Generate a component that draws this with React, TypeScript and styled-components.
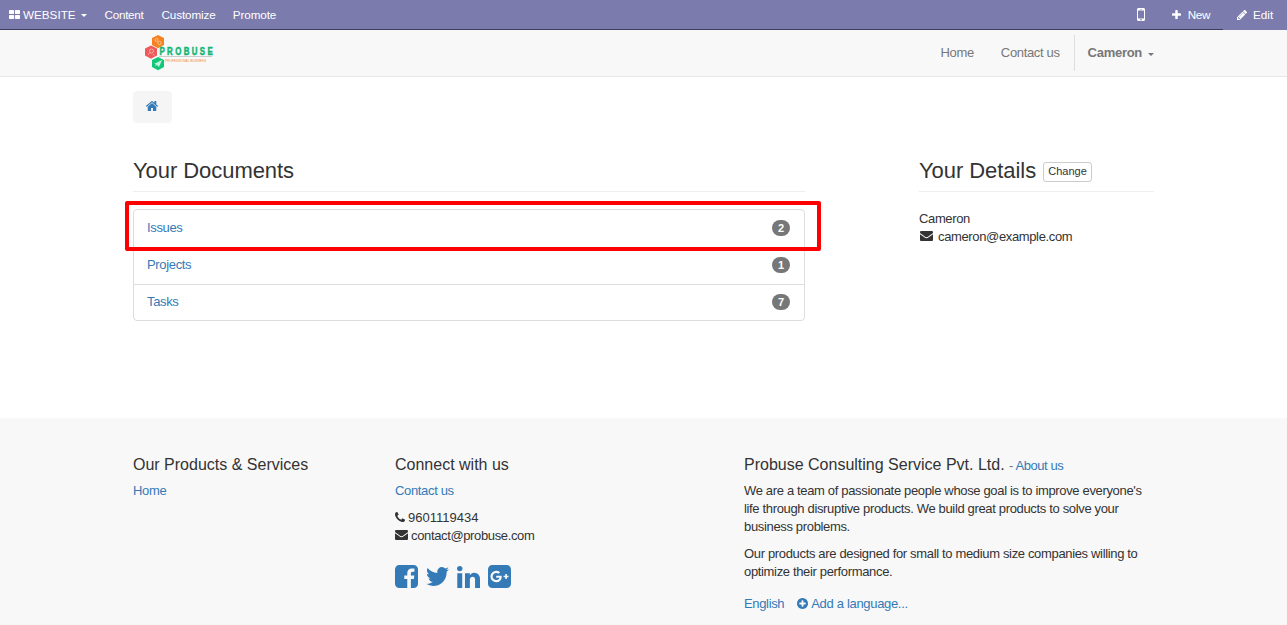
import React from 'react';
import styled, { createGlobalStyle } from 'styled-components';

const GlobalStyle = createGlobalStyle`
  *, *::before, *::after { box-sizing: border-box; }
  body {
    margin: 0;
    background: #fff;
    color: #333;
    font: 13px/18px "Liberation Sans", Arial, sans-serif;
    letter-spacing: -0.34px;
    overflow: hidden;
  }
  h3, h4, p, ul { margin: 0; padding: 0; font-weight: 400; }
  a { color: #337ab7; text-decoration: none; }
`;

/* Font Awesome 4 outlines: viewBox and path */
const glyphs = {
  thLarge: ['64 128 1664 1408', 'M832 1024v384q0 52-38 90t-90 38h-512q-52 0-90-38t-38-90v-384q0-52 38-90t90-38h512q52 0 90 38t38 90zm0-768v384q0 52-38 90t-90 38h-512q-52 0-90-38t-38-90v-384q0-52 38-90t90-38h512q52 0 90 38t38 90zm896 768v384q0 52-38 90t-90 38h-512q-52 0-90-38t-38-90v-384q0-52 38-90t90-38h512q52 0 90 38t38 90zm0-768v384q0 52-38 90t-90 38h-512q-52 0-90-38t-38-90v-384q0-52 38-90t90-38h512q52 0 90 38t38 90z'],
  home: ['89 250 1614 1290', 'M1472 992v480q0 26-19 45t-45 19h-384v-384h-256v384h-384q-26 0-45-19t-19-45v-480q0-1 .5-3t.5-3l575-474 575 474q1 2 1 6zm223-69l-62 74q-8 9-21 11h-3q-13 0-21-7l-692-577-692 577q-12 8-24 7-13-2-21-11l-62-74q-8-10-7-23.5t11-21.5l719-599q32-26 76-26t76 26l244 204v-195q0-14 9-23t23-9h192q14 0 23 9t9 23v408l219 182q10 8 11 21.5t-7 23.5z'],
  plus: ['192 128 1408 1408', 'M1600 736v192q0 40-28 68t-68 28h-416v416q0 40-28 68t-68 28h-192q-40 0-68-28t-28-68v-416h-416q-40 0-68-28t-28-68v-192q0-40 28-68t68-28h416v-416q0-40 28-68t68-28h192q40 0 68 28t28 68v416h416q40 0 68 28t28 68z'],
  pencil: ['128 149 1515 1515', 'M491 1536l91-91-235-235-91 91v107h128v128h107zm523-928q0-22-22-22-10 0-17 7l-542 542q-7 7-7 17 0 22 22 22 10 0 17-7l542-542q7-7 7-17zm-54-192l416 416-832 832h-416v-416zm683 96q0 53-37 90l-166 166-416-416 166-165q36-38 90-38 53 0 91 38l235 234q37 39 37 91z'],
  mobile: ['512 256 768 1280', 'M976 1408q0-33-23.5-56.5t-56.5-23.5-56.5 23.5-23.5 56.5 23.5 56.5 56.5 23.5 56.5-23.5 23.5-56.5zm208-160v-704q0-13-9.5-22.5t-22.5-9.5h-512q-13 0-22.5 9.5t-9.5 22.5v704q0 13 9.5 22.5t22.5 9.5h512q13 0 22.5-9.5t9.5-22.5zm-192-848q0-16-16-16h-160q-16 0-16 16t16 16h160q16 0 16-16zm288-16v1024q0 52-38 90t-90 38h-512q-52 0-90-38t-38-90v-1024q0-52 38-90t90-38h512q52 0 90 38t38 90z'],
  envelope: ['0 256 1792 1408', 'M1792 710v794q0 66-47 113t-113 47h-1472q-66 0-113-47t-47-113v-794q44 49 101 87 362 246 497 345 57 42 92.5 65.5t94.5 48 110 24.5h2q51 0 110-24.5t94.5-48 92.5-65.5q170-123 498-345 57-39 100-87zm0-294q0 79-49 151t-122 123q-376 261-468 325-10 7-42.5 31t-54 38.5-52 32.5-57.5 27-50 9h-2q-23 0-50-9t-57.5-27-52-32.5-54-38.5-42.5-31q-91-64-262-182.5t-205-142.5q-62-42-117-115.5t-55-136.5q0-78 41.5-130t118.5-52h1472q65 0 112.5 47t47.5 113z'],
  phone: ['192 128 1408 1408', 'M1600 1240q0 27-10 70.5t-21 68.5q-21 50-122 106-94 51-186 51-27 0-52.5-3.5t-57.5-12.5-47.5-14.5-55.5-20.5-49-18q-98-35-175-83-128-79-264.5-215.5t-215.5-264.5q-48-77-83-175-3-9-18-49t-20.5-55.5-14.5-47.5-12.5-57.5-3.5-52.5q0-92 51-186 56-101 106-122 25-11 68.5-21t70.5-10q14 0 21 3 18 6 53 76 11 19 30 54t35 63.5 31 53.5q3 4 17.5 25t21.5 35.5 7 28.5q0 20-28.5 50t-62 55-62 53-28.5 46q0 9 5 22.5t8.5 20.5 14 24 11.5 19q76 137 174 235t235 174q2 1 19 11.5t24 14 20.5 8.5 22.5 5q18 0 46-28.5t53-62 55-62 50-28.5q14 0 28.5 7t35.5 21.5 25 17.5q25 15 53.5 31t63.5 35 54 30q70 35 76 53 3 7 3 21z'],
  facebook: ['128 128 1536 1536', 'M1376 128q119 0 203.5 84.5t84.5 203.5v960q0 119-84.5 203.5t-203.5 84.5h-188v-595h199l30-232h-229v-148q0-56 23.5-84t91.5-28l122-1v-207q-63-9-178-9-136 0-217.5 80t-81.5 226v171h-200v232h200v595h-532q-119 0-203.5-84.5t-84.5-203.5v-960q0-119 84.5-203.5t203.5-84.5h960z'],
  twitter: ['108 256 1576 1280', 'M1684 408q-67 98-162 167 1 14 1 42 0 130-38 259.5t-115.5 248.5-184.5 210.5-258 146-323 54.5q-271 0-496-145 35 4 78 4 225 0 401-138-105-2-188-64.5t-114-159.5q33 5 61 5 43 0 85-11-112-23-185.5-111.5t-73.5-205.5v-4q68 38 146 41-66-44-105-115t-39-154q0-88 44-163 121 149 294.5 238.5t371.5 99.5q-8-38-8-74 0-134 94.5-228.5t228.5-94.5q140 0 236 102 109-21 205-78-37 115-142 178 93-10 186-50z'],
  linkedin: ['128 148 1536 1468', 'M477 625v991h-330v-991h330zm21-306q1 73-50.5 122t-135.5 49h-2q-82 0-132-49t-50-122q0-74 51.5-122.5t134.5-48.5 133 48.5 51 122.5zm1166 729v568h-329v-530q0-105-40.5-164.5t-126.5-59.5q-63 0-105.5 34.5t-63.5 85.5q-11 30-11 81v553h-329q2-399 2-647t-1-296l-1-48h329v144h-2q20-32 41-56t56.5-52 87-43.5 114.5-15.5q171 0 275 113.5t104 332.5z'],
  googlePlus: ['128 128 1536 1536', 'M1045 905q0-26-6-64h-362v132h217q-3 24-16.5 50t-37.5 53-66.5 44.5-96.5 17.5q-99 0-169-71t-70-171 70-171 169-71q92 0 153 59l104-101q-108-100-257-100-160 0-272 112.5t-112 271.5 112 271.5 272 112.5q165 0 266.5-105t101.5-270zm345 46h109v-110h-109v-110h-110v110h-110v110h110v110h110v-110zm274-535v960q0 119-84.5 203.5t-203.5 84.5h-960q-119 0-203.5-84.5t-84.5-203.5v-960q0-119 84.5-203.5t203.5-84.5h960q119 0 203.5 84.5t84.5 203.5z'],
  plusCircle: ['128 128 1536 1536', 'M1344 960v-128q0-26-19-45t-45-19h-256v-256q0-26-19-45t-45-19h-128q-26 0-45 19t-19 45v256h-256q-26 0-45 19t-19 45v128q0 26 19 45t45 19h256v256q0 26 19 45t45 19h128q26 0 45-19t19-45v-256h256q26 0 45-19t19-45zm320-64q0 209-103 385.5t-279.5 279.5-385.5 103-385.5-103-279.5-279.5-103-385.5 103-385.5 279.5-279.5 385.5-103 385.5 103 279.5 279.5 103 385.5z'],
} as const;

const Glyph = styled.svg`
  display: block;
  flex: none;
  fill: currentColor;
`;

function Icon({ name, w, h = w }: { name: keyof typeof glyphs; w: number; h?: number }) {
  const [box, d] = glyphs[name];
  return (
    <Glyph width={w} height={h} viewBox={box} preserveAspectRatio="none" aria-hidden>
      <path d={d} />
    </Glyph>
  );
}

const AdminBar = styled.header`
  display: flex;
  height: 30px;
  background: #7c7bad;
  color: #fff;
  font-size: 11.7px;
`;
const AdminMain = styled.div`
  display: flex;
  width: 1223px;
  padding: 0 13px 0 9px;
  border-bottom: 1px solid #3f3d5c;
`;
const AdminItem = styled.a<{ $ml?: number; $gap?: number; $ls?: number }>`
  display: flex;
  align-items: center;
  height: 29px;
  gap: ${p => p.$gap ?? 3}px;
  margin-left: ${p => p.$ml ?? 0}px;
  letter-spacing: ${p => p.$ls ?? -0.1}px;
  color: #fff;
  white-space: nowrap;
`;
const Spacer = styled.div`
  flex: 1;
`;
const Caret = styled.span<{ $ml: number }>`
  width: 0;
  border: 3px solid transparent;
  border-top-color: currentColor;
  border-bottom: 0;
  margin: 2px 0 0 ${p => p.$ml}px;
`;

const NavBar = styled.nav`
  height: 47px;
  background: #f8f8f8;
  border-bottom: 1px solid #e7e7e7;
`;
const Container = styled.div`
  width: 1021px;
  margin: 0 auto;
`;
const NavRow = styled(Container)`
  display: flex;
  height: 46px;
  align-items: center;
`;
const Logo = styled.svg`
  display: block;
  margin-left: 11px;
`;
const NavLink = styled.a<{ $ml: number }>`
  margin-left: ${p => p.$ml}px;
  color: #777;
`;
const UserMenu = styled.a`
  display: flex;
  align-items: center;
  height: 36px;
  margin: 0 0 0 14px;
  padding-left: 13px;
  border-left: 1px solid #ddd;
  color: #777;
  font-weight: 700;
  letter-spacing: -0.28px;
`;

const Main = styled.main`
  height: 341px;
  padding-top: 14px;
`;
const Breadcrumb = styled.div`
  display: flex;
  align-items: center;
  width: 39px;
  height: 32px;
  padding: 0 0 2px 13px;
  border-radius: 4px;
  background: #f5f5f5;
  color: #337ab7;
`;
const Columns = styled.div`
  display: flex;
  justify-content: space-between;
  margin-top: 34px;
`;
const Documents = styled.section`
  width: 672px;
`;
const Details = styled.section`
  width: 235px;
`;
const Heading = styled.h3`
  display: flex;
  align-items: center;
  height: 35px;
  padding-bottom: 7px;
  border-bottom: 1px solid #eee;
  font-size: 22px;
  line-height: 26px;
  letter-spacing: -0.06px;
  white-space: nowrap;
`;
const ChangeButton = styled.button`
  width: 49px;
  height: 20px;
  margin: 2px 0 0 7px;
  padding: 0 0 1px;
  border: 1px solid #ccc;
  border-radius: 3px;
  background: #fff;
  color: #333;
  font: 11px/16px "Liberation Sans", Arial, sans-serif;
`;
const List = styled.ul`
  margin-top: 17px;
  height: 112px;
  border: 1px solid #ddd;
  border-radius: 4px;
  list-style: none;
`;
const ListRow = styled.li`
  position: relative;
  display: flex;
  align-items: center;
  justify-content: space-between;
  height: 37px;
  padding: 0 14px 1px 13px;
  & + & {
    height: 36.5px;
    border-top: 1px solid #ddd;
  }
`;
const Badge = styled.span`
  min-width: 18px;
  height: 16px;
  border-radius: 9px;
  background: #777;
  color: #fff;
  font-size: 11px;
  font-weight: 700;
  line-height: 16px;
  letter-spacing: 0;
  text-align: center;
`;
const Highlight = styled.div`
  position: absolute;
  z-index: 1;
  top: -9px;
  left: -9px;
  width: 696px;
  height: 50px;
  border: 4px solid #f00;
  border-radius: 2px;
`;
const Line = styled.div<{ $gap?: number; $ls?: number }>`
  display: flex;
  align-items: center;
  height: 18px;
  gap: ${p => p.$gap ?? 3}px;
  letter-spacing: ${p => p.$ls ?? -0.36}px;
  svg { margin-top: -2px; }
`;
const Contact = styled.address`
  margin-top: 18px;
  font-style: normal;
  ${Line} + ${Line} {
    height: 17px;
    padding-left: 1px;
  }
`;

const Footer = styled.footer`
  height: 207px;
  padding-top: 36px;
  background: #f8f8f8;
`;
const FooterGrid = styled(Container)`
  display: grid;
  grid-template-columns: 262px 349px 410px;
`;
const FooterTitle = styled.h4`
  height: 20px;
  margin-bottom: 8px;
  font-size: 16px;
  line-height: 22px;
  letter-spacing: 0;
  white-space: nowrap;
  small { font-size: 13px; letter-spacing: -0.42px; color: #777; }
`;
const Paragraph = styled.p`
  margin-bottom: 9px;
  white-space: nowrap;
`;
const Socials = styled.div`
  display: flex;
  gap: 8px;
  align-items: center;
  margin-top: 20px;
  color: #337ab7;
`;
const Languages = styled.div`
  display: flex;
  gap: 13px;
  margin-top: 14px;
`;
const AddLanguage = styled.a`
  display: flex;
  align-items: center;
  gap: 3px;
  letter-spacing: -0.32px;
  svg { margin-top: -1px; }
`;

const documents = [
  { label: 'Issues', count: 2, highlighted: true },
  { label: 'Projects', count: 1 },
  { label: 'Tasks', count: 7 },
];

function ProbuseLogo() {
  return (
    <Logo width="70" height="38" viewBox="0 0 70 38">
      <path d="M14 1l6 3v7l-6 3.200L8 11V4z" fill="#f58220" />
      <path d="M7 11.500l6 3v7l-6 3.200L1 21.500v-7z" fill="#f0595a" />
      <path d="M14 23l6 3v7l-6 3.200L8 33v-7z" fill="#10c878" />
      <g fill="none" stroke="#fff" strokeWidth=".8" opacity=".6">
        <circle cx="12.500" cy="6" r="1.500" />
        <circle cx="15.500" cy="9" r="1.700" />
        <circle cx="7.500" cy="17" r="2" />
        <path d="M6 18.500L4 21m5-1l1 1.500" />
      </g>
      <path d="M10 30l8-4-3 7-2-2-2 1 1-2z" fill="#fff" opacity=".75" />
      <path d="M15 22.500h53" stroke="#ccc" strokeWidth="1" />
      <text transform="translate(15.500 20.800) scale(.75 1)" fontSize="10.500" fontWeight="700" fill="#12b573" stroke="#12b573" strokeWidth=".5" textLength="71" fontFamily="Liberation Sans" letterSpacing="0">PROBUSE</text>
      <text x="21" y="27.800" fontSize="3.800" fill="#f08a3c" textLength="41" lengthAdjust="spacingAndGlyphs" fontFamily="Liberation Sans" letterSpacing="0">PROFESSIONAL BUSINESS</text>
    </Logo>
  );
}

export default function App() {
  return (
    <>
      <GlobalStyle />
      <AdminBar>
        <AdminMain>
          <AdminItem $ls={0}><Icon name="thLarge" w={11} h={9} />WEBSITE<Caret $ml={2} /></AdminItem>
          <AdminItem $ml={18} $ls={-0.3}>Content</AdminItem>
          <AdminItem $ml={18}>Customize</AdminItem>
          <AdminItem $ml={17}>Promote</AdminItem>
          <Spacer />
          <AdminItem><Icon name="mobile" w={8} h={13} /></AdminItem>
          <AdminItem $ml={27} $gap={7} $ls={-0.4}><Icon name="plus" w={9} />New</AdminItem>
        </AdminMain>
        <AdminItem $ml={14} $gap={6} $ls={0}><Icon name="pencil" w={10} />Edit</AdminItem>
      </AdminBar>
      <NavBar>
        <NavRow>
          <ProbuseLogo />
          <Spacer />
          <NavLink $ml={0}>Home</NavLink>
          <NavLink $ml={27}>Contact us</NavLink>
          <UserMenu>Cameron<Caret $ml={6} /></UserMenu>
        </NavRow>
      </NavBar>
      <Main>
        <Container>
          <Breadcrumb><Icon name="home" w={12} h={10} /></Breadcrumb>
          <Columns>
            <Documents>
              <Heading>Your Documents</Heading>
              <List>
                {documents.map(d => (
                  <ListRow key={d.label}>
                    <a>{d.label}</a>
                    <Badge>{d.count}</Badge>
                    {d.highlighted && <Highlight />}
                  </ListRow>
                ))}
              </List>
            </Documents>
            <Details>
              <Heading>Your Details<ChangeButton>Change</ChangeButton></Heading>
              <Contact>
                <Line>Cameron</Line>
                <Line $gap={5}><Icon name="envelope" w={13} h={10} />cameron@example.com</Line>
              </Contact>
            </Details>
          </Columns>
        </Container>
      </Main>
      <Footer>
        <FooterGrid>
          <div>
            <FooterTitle>Our Products &amp; Services</FooterTitle>
            <a>Home</a>
          </div>
          <div>
            <FooterTitle>Connect with us</FooterTitle>
            <Paragraph><a>Contact us</a></Paragraph>
            <Line $ls={0}><Icon name="phone" w={10} />9601119434</Line>
            <Line><Icon name="envelope" w={13} h={10} />contact@probuse.com</Line>
            <Socials>
              <Icon name="facebook" w={23} />
              <Icon name="twitter" w={23} h={19} />
              <Icon name="linkedin" w={23} h={22} />
              <Icon name="googlePlus" w={23} />
            </Socials>
          </div>
          <div>
            <FooterTitle>Probuse Consulting Service Pvt. Ltd. <small>- <a>About us</a></small></FooterTitle>
            <Paragraph>
              We are a team of passionate people whose goal is to improve everyone's<br />
              life through disruptive products. We build great products to solve your<br />
              business problems.
            </Paragraph>
            <Paragraph>
              Our products are designed for small to medium size companies willing to<br />
              optimize their performance.
            </Paragraph>
            <Languages>
              <a>English</a>
              <AddLanguage><Icon name="plusCircle" w={11} />Add a language...</AddLanguage>
            </Languages>
          </div>
        </FooterGrid>
      </Footer>
    </>
  );
}
